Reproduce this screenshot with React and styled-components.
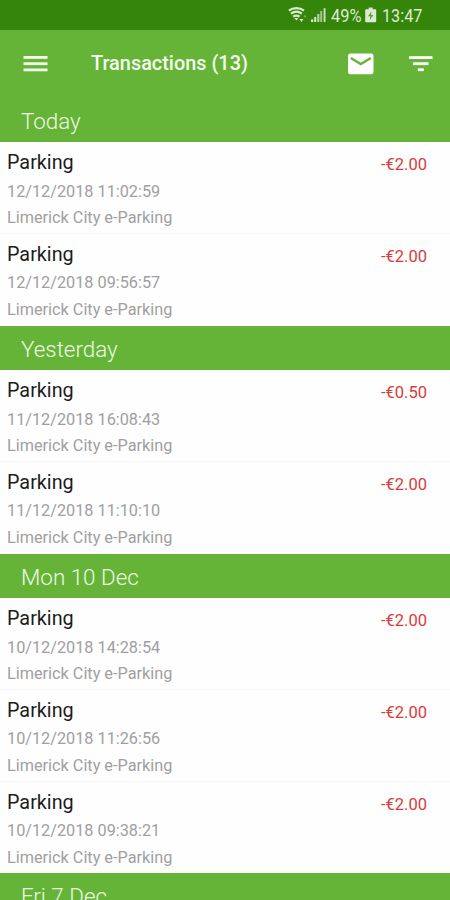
import styled, { createGlobalStyle } from 'styled-components';

const GlobalStyle = createGlobalStyle`
	* {
		box-sizing: border-box;
	}

	body {
		margin: 0;
		background: #fefefe;
		font-family: Roboto, 'Liberation Sans', sans-serif;
	}
`;

const groups = [
	{
		title: 'Today',
		items: [
			{ date: '12/12/2018 11:02:59', amount: '-€2.00' },
			{ date: '12/12/2018 09:56:57', amount: '-€2.00' },
		],
	},
	{
		title: 'Yesterday',
		items: [
			{ date: '11/12/2018 16:08:43', amount: '-€0.50' },
			{ date: '11/12/2018 11:10:10', amount: '-€2.00' },
		],
	},
	{
		title: 'Mon 10 Dec',
		items: [
			{ date: '10/12/2018 14:28:54', amount: '-€2.00' },
			{ date: '10/12/2018 11:26:56', amount: '-€2.00' },
			{ date: '10/12/2018 09:38:21', amount: '-€2.00' },
		],
	},
	{ title: 'Fri 7 Dec', items: [] },
];

const Screen = styled.div`
	display: flex;
	flex-direction: column;
	width: 450px;
	height: 900px;
	overflow: hidden;
`;

const StatusBar = styled.div`
	display: flex;
	flex: none;
	align-items: center;
	height: 30px;
	padding-left: 288px;
	background: #35850b;
	color: #dcebd0;

	svg {
		flex: none;
	}
`;

const StatusText = styled.span`
	flex: none;
	width: ${({ $width }) => $width}px;
	margin-left: 5px;
	font-size: 18px;
	line-height: 30px;
	white-space: nowrap;
	transform: translateY(1px) scaleX(${({ $scale }) => $scale});
	transform-origin: left;
`;

const AppBar = styled.header`
	display: flex;
	flex: none;
	align-items: center;
	height: 67.7px;
	padding: 0 17px 0 23px;
	background: #65b437;
	color: #fff;
`;

const Title = styled.h1`
	flex: 1;
	margin: 1px 0 0 43px;
	font-size: 19.9px;
	font-weight: 500;
	line-height: 24px;
	color: #f4fbee;
`;

const Actions = styled.div`
	display: flex;
	align-items: center;
	gap: 35px;
`;

const SectionHeader = styled.h2`
	flex: none;
	height: 44.6px;
	margin: 0;
	padding-left: 21px;
	background: #65b437;
	color: #eef8e6;
	font-size: 22.4px;
	font-weight: 300;
	line-height: 46.6px;
`;

const Row = styled.div`
	display: flex;
	flex: none;
	justify-content: space-between;
	height: 91.7px;
	padding: 8px 23px 0 7px;
	border-bottom: 1px solid ${({ $last }) => ($last ? 'transparent' : '#f7f7f7')};
`;

const Name = styled.div`
	margin-bottom: 2.5px;
	font-size: 19.8px;
	line-height: 26px;
	color: #1c1c1c;
`;

const Detail = styled.div`
	font-size: 16.25px;
	line-height: 26.5px;
	color: #a0a0a0;
`;

const Amount = styled.div`
	margin-top: 3px;
	font-size: 16.5px;
	line-height: 24px;
	color: #d93a3a;
`;

const WifiIcon = () => (
	<svg width="20" height="18" viewBox="0 0 20 18" fill="none" stroke="currentColor">
		<path d="M.8 4.6C5.2 1.2 11.6 1.2 16 4.6" strokeWidth="2.2" />
		<path d="M3 7.7C6.4 5.2 10.4 5.2 13.8 7.7" strokeWidth="2.2" />
		<path d="M5.2 10.7C7.4 9.1 9.4 9.1 11.6 10.7" strokeWidth="2.2" />
		<path d="M6.4 12L8.4 14.4L10.4 12Z" fill="currentColor" stroke="none" />
		<path d="M11.4 13L13.4 16L15.4 13Z" fill="currentColor" stroke="none" />
		<path d="M15.4 11.3L17 8.8L18.6 11.3Z" fill="currentColor" stroke="none" opacity=".4" />
	</svg>
);

const SignalIcon = () => (
	<svg width="18" height="18" viewBox="0 0 18 18" fill="currentColor">
		<rect x="3" y="13.5" width="2.2" height="2.5" />
		<rect x="6.2" y="11" width="2" height="5" />
		<rect x="9.2" y="8" width="2.2" height="8" opacity=".75" />
		<rect x="12.2" y="5" width="2" height="11" opacity=".65" />
		<rect x="15.6" y="2.2" width="1.9" height="13.8" opacity=".9" />
	</svg>
);

const BatteryIcon = () => (
	<svg width="12" height="18" viewBox="0 0 12 18">
		<path d="M3.7 1.5h4v1.8h2.5q1 0 1 1v11q0 1-1 1h-9q-1 0-1-1v-11q0-1 1-1h2.5z" fill="currentColor" />
		<path d="M6.4 5.3L3 10.3h2.3L4.8 14L8.4 9H6z" fill="#35850b" opacity=".75" />
	</svg>
);

const MenuIcon = () => (
	<svg width="25" height="18" viewBox="0 0 25 18" fill="#f4fbee">
		<rect x=".5" y="1" width="24" height="2.8" />
		<rect x=".5" y="7.3" width="24" height="2.8" />
		<rect x=".5" y="13.5" width="24" height="2.8" />
	</svg>
);

const MailIcon = () => (
	<svg width="26" height="22" viewBox="0 0 26 22">
		<rect width="25.5" height="20.7" y=".6" rx="2.4" fill="#fff" />
		<path d="M2.8 4.9L12.8 11L22.8 4.9" fill="none" stroke="#65b437" strokeWidth="2.4" />
	</svg>
);

const FilterIcon = () => (
	<svg width="24" height="18" viewBox="0 0 24 18" fill="#fff">
		<rect x="0" y="1.2" width="23.5" height="2.8" />
		<rect x="4" y="7.3" width="15.5" height="2.8" />
		<rect x="8.8" y="13.3" width="6" height="2.8" />
	</svg>
);

const Transaction = ({ date, amount, last }) => (
	<Row $last={last}>
		<div>
			<Name>Parking</Name>
			<Detail>{date}</Detail>
			<Detail>Limerick City e-Parking</Detail>
		</div>
		<Amount>{amount}</Amount>
	</Row>
);

const App = () => (
	<>
		<GlobalStyle />
		<Screen>
			<StatusBar>
				<WifiIcon />
				<SignalIcon />
				<StatusText $width={34} $scale={0.91}>
					49%
				</StatusText>
				<BatteryIcon />
				<StatusText $width={40} $scale={0.9}>
					13:47
				</StatusText>
			</StatusBar>
			<AppBar>
				<MenuIcon />
				<Title>Transactions (13)</Title>
				<Actions>
					<MailIcon />
					<FilterIcon />
				</Actions>
			</AppBar>
			{groups.map(({ title, items }) => (
				<div key={title}>
					<SectionHeader>{title}</SectionHeader>
					{items.map((item, index) => (
						<Transaction key={item.date} {...item} last={index === items.length - 1} />
					))}
				</div>
			))}
		</Screen>
	</>
);

export default App;
